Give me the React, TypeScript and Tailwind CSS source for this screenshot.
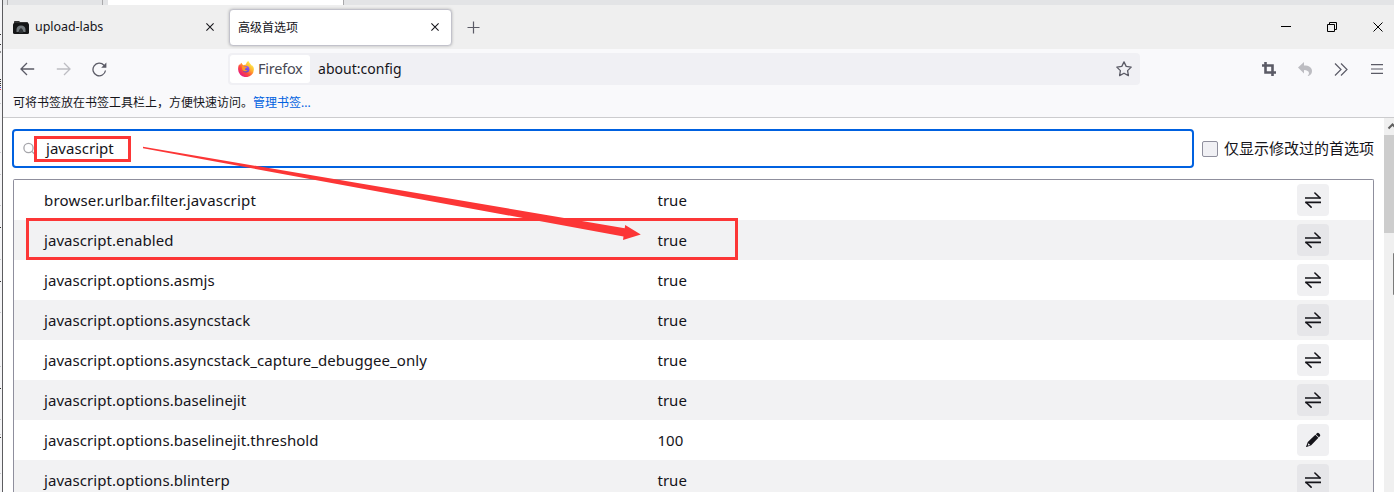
import React from 'react';

const font = "font-['Noto_Sans','Noto_Sans_CJK_SC',sans-serif]";

const rows: [string, string, string][] = [
  ['browser.urlbar.filter.javascript', 'true', 'toggle'],
  ['javascript.enabled', 'true', 'toggle'],
  ['javascript.options.asmjs', 'true', 'toggle'],
  ['javascript.options.asyncstack', 'true', 'toggle'],
  ['javascript.options.asyncstack_capture_debuggee_only', 'true', 'toggle'],
  ['javascript.options.baselinejit', 'true', 'toggle'],
  ['javascript.options.baselinejit.threshold', '100', 'edit'],
  ['javascript.options.blinterp', 'true', 'toggle'],
];

const ToggleIcon = () => (
  <svg width="16" height="16" viewBox="0 0 16 16" fill="none" stroke="#15141a">
    <path d="M0 6h15.800M.2 10.300H16" strokeWidth="1.700" />
    <path d="M9.900 1l4.900 4.800M6.100 15.200L1.200 10.500" strokeWidth="1.600" strokeLinecap="round" />
  </svg>
);

const EditIcon = () => (
  <svg width="16" height="16" viewBox="0 0 16 16" fill="#15141a">
    <path d="M10.800 2.300l.9-.9a1.700 1.700 0 0 1 2.400 0l.6.6a1.700 1.700 0 0 1 0 2.400l-.9.900z" />
    <path fillRule="evenodd" d="M10.300 2.700l3.100 3.100-7.200 7.500L1.600 15.100a.4.4 0 0 1-.5-.5l1.700-4.500zM3.500 11.300l-.7 2 .3.300 2-.7z" />
  </svg>
);

const Close = ({ size = 10, color = '#15141a', stroke = 1.2 }: { size?: number; color?: string; stroke?: number }) => (
  <svg width={size} height={size} viewBox="0 0 10 10" fill="none" stroke={color} strokeWidth={stroke}>
    <path d="M.5.5l9 9M9.500.5l-9 9" />
  </svg>
);

const FirefoxLogo = () => (
  <svg width="16" height="16" viewBox="0 0 16 16">
    <defs>
      <linearGradient id="flame" x1=".85" y1=".1" x2=".15" y2=".9">
        <stop offset="0" stopColor="#fff44f" />
        <stop offset=".35" stopColor="#ffb02e" />
        <stop offset=".65" stopColor="#ff4a3c" />
        <stop offset="1" stopColor="#e31587" />
      </linearGradient>
      <linearGradient id="globe" x1=".7" y1="0" x2=".3" y2="1">
        <stop offset="0" stopColor="#9059ff" />
        <stop offset="1" stopColor="#5b3fc4" />
      </linearGradient>
    </defs>
    <path fill="url(#flame)" d="M15.500 6.200c-.4-1-1.100-1.900-1.800-2.300.4.800.6 1.500.7 2.100C13.500 3.400 11.400 2.400 10.300 0 8.700 1 8.100 2.500 8 3.500c-.9.100-1.600.300-2.300.700C4.400 4 3.800 3 3.600 1.800 2.700 2.300 2.200 3.300 2 4.200 1.500 3.900 1.500 3.300 1.500 3 .5 4.400.1 6.200.1 8a7.900 7.900 0 0 0 15.800.4c0-.8-.1-1.500-.4-2.200z" />
    <circle cx="8.100" cy="8.300" r="3.300" fill="url(#globe)" />
    <path fill="#ff9a25" d="M4 5.200c1.200-.6 2.200-.1 2.800.5h2c.5.200.1.900-.7 1.200-.8.300-.7.700-1.300 1 .5 1.500 2 1.400 3 1-1 2-4.600 2-5.600-.7z" />
  </svg>
);

const Folder = () => (
  <svg width="16" height="14" viewBox="0 0 16 14">
    <path d="M1 1.800Q1 1 1.800 1H6l1.200 1h7q.8 0 .8.800V6H1z" fill="#333" />
    <rect x="0" y="3" width="16" height="11" rx="1.500" fill="#141516" />
    <path d="M3.500 12V9.800C3.500 7.500 5 5.600 8 5.600s4.500 1.900 4.500 4.200V12h-2l-.8-2L8 8.300 6.300 10l-.8 2z" fill="#70777b" />
    <path d="M6 12.800V10.300l2-2 2 2v2.500z" fill="#303437" />
  </svg>
);

export default function App() {
  return (
    <div className={`relative flex h-[492px] w-[1394px] overflow-hidden bg-white text-[#15141a] ${font}`}>
      <div className="w-[3px] shrink-0 border-r border-[#5c5c5f] bg-[#f5f5f7]">
        <svg width="2" height="492" viewBox="0 0 2 492">
          <path d="M0 34.500h1M0 44.500h1M0 52h1M0 227.500h1M0 281.500h1M0 388.500h1M0 437.500h1" stroke="#333" />
          <path d="M0 79.500h1M0 81.500h1M0 83.500h1M0 85.500h1" stroke="#333" />
          <path d="M0 87.500h1" stroke="#4a4ad0" />
          <path d="M0 89.500h1" stroke="#d04a5a" />
          <path d="M0 103.500h1M0 152.500h1M0 174.500h1M0 205.500h1M0 259.500h1M0 312.500h1M0 366.500h1M0 419.500h1M0 434.500h1M0 473.500h1" stroke="#c8c8cc" />
        </svg>
      </div>
      <div className="flex min-w-0 flex-1 flex-col">
        <div className="flex h-[5px] shrink-0 bg-[#e3e4e6]">
          <div className="ml-[4px] w-[96px] border-x border-[#a9a9ab]" />
          <div className="ml-[5px] w-[236px] border-r border-[#a9a9ab] bg-white" />
        </div>

        <div className="flex h-11 shrink-0 items-center bg-[#efefef] text-[12px]">
          <div className="flex h-full w-[226px] items-center pl-[10px]">
            <Folder />
            <span className="ml-[6px] flex-1 pt-px text-[12.5px] tracking-[-0.05px] whitespace-nowrap">upload-labs</span>
            <span className="mr-[15px]"><Close size={8} stroke={1.3} /></span>
          </div>
          <div className="flex h-[37px] w-[223px] items-center rounded border border-[#c2c2cb] bg-white pl-2 shadow-[0_0_3px_rgba(0,0,0,0.25)]">
            <span className="flex-1 pt-[2px] whitespace-nowrap">高级首选项</span>
            <span className="mr-3"><Close size={8} stroke={1.3} /></span>
          </div>
          <svg className="ml-[15px]" width="13" height="13" viewBox="0 0 13 13" stroke="#5b5b66" strokeWidth="1.200"><path d="M6.500.5v12M.5 6.500h12" /></svg>
          <div className="ml-auto flex items-center">
            <svg width="10" height="10" viewBox="0 0 10 10"><path d="M0 4.500h10" stroke="#000" /></svg>
            <svg className="ml-9" width="10" height="10" viewBox="0 0 10 10" fill="none" stroke="#000"><path d="M.5 2.500h7v7h-7zM2.500 2V.5h7v7H8" /></svg>
            <span className="mr-[11px] ml-9"><Close color="#000" stroke={1} /></span>
          </div>
        </div>

        <div className="flex h-10 shrink-0 items-center bg-[#f9f9fb] text-[#5b5b66]">
          <svg className="ml-[17px]" width="15" height="14" viewBox="0 0 15 14" fill="none" stroke="#5b5b66" strokeWidth="1.300"><path d="M14.200 7H1M7 1L1 7l6 6" /></svg>
          <svg className="ml-[21px]" width="15" height="14" viewBox="0 0 15 14" fill="none" stroke="#bdbdc2" strokeWidth="1.300"><path d="M.8 7H14M8 1l6 6-6 6" /></svg>
          <svg className="ml-[21px]" width="15" height="15" viewBox="0 0 15 15" fill="none" stroke="#5b5b66" strokeWidth="1.300"><path d="M13.500 8.500A6.300 6.300 0 1 1 12 3.300l1.500 1.500" /><path d="M14.400.5v5.200H9.200z" fill="#5b5b66" stroke="none" /></svg>
          <div className="ml-[121px] flex h-8 w-[912px] items-center rounded bg-[#f0f0f4] pl-[2px]">
            <div className="flex h-7 w-20 items-center rounded-[3px] bg-white pl-2">
              <FirefoxLogo />
              <span className="ml-1 pb-px text-[14.500px] tracking-[-0.25px] text-[#4a4a55]">Firefox</span>
            </div>
            <span className="ml-2 flex-1 text-[14px]/[20px] tracking-[0.03px] text-[#15141a]">about:config</span>
            <svg className="mr-2" width="16" height="16" viewBox="0 0 16 16" fill="none" stroke="#5b5b66" strokeWidth="1.300" strokeLinejoin="round"><path d="M8 .9l2.200 4.500 5 .7-3.600 3.500.8 5L8 12.200l-4.400 2.400.8-5L.8 6.100l5-.7z" /></svg>
          </div>
          <svg className="ml-[122px]" width="14" height="14" viewBox="0 0 14 14" fill="none" stroke="#5b5b66" strokeWidth="2.600"><path d="M0 3.500h10.500V14M3.500 0v10.500H14" /></svg>
          <svg className="ml-[22px]" width="14" height="14" viewBox="0 0 14 14" fill="#bdbdc2"><path d="M0 5.500L6 0v3.500c5 0 8 2 8 5.500 0 2-1 4-3.500 5-.8.200-1 0-.5-.6C12.500 10.500 10 8 6 8v3.500z" /></svg>
          <svg className="ml-[22px]" width="14" height="13" viewBox="0 0 14 13" fill="none" stroke="#5b5b66" strokeWidth="1.200"><path d="M1 .5l6 6-6 6M7 .5l6 6-6 6" /></svg>
          <svg className="ml-[23px]" width="12" height="10" viewBox="0 0 12 10" stroke="#5b5b66" strokeWidth="1.200"><path d="M0 .6h12M0 5h12M0 9.400h12" /></svg>
        </div>

        <div className="flex h-[29px] shrink-0 items-center border-b border-[#ccccce] bg-[#f9f9fb] pl-[10px] text-[12px] whitespace-nowrap">
          <span>可将书签放在书签工具栏上，方便快速访问。</span>
          <a className="text-[#0061e0]">管理书签...</a>
        </div>

        <div className="flex min-h-0 flex-1">
          <div className="flex w-[1381px] shrink-0 flex-col pt-[11px] pl-[9px]">
            <div className="flex items-center">
              <div className="flex h-[39px] w-[1182px] items-center rounded border-2 border-[#0061e0] pl-[9px]">
                <svg width="14" height="14" viewBox="0 0 14 14" fill="none" stroke="#a5a5aa" strokeWidth="1.300"><circle cx="5.500" cy="6" r="4.600" /><path d="M9 9.500l4 4" /></svg>
                <span className="ml-[9px] text-[15px] tracking-[0.04px]">javascript</span>
              </div>
              <span className="ml-2 size-4 rounded-[2px] border border-[#8f8f9d] bg-[#f0f0f4]" />
              <span className="ml-[6px] text-[15px] whitespace-nowrap">仅显示修改过的首选项</span>
            </div>
            <div className="mt-[11px] ml-px flex w-[1361px] flex-1 flex-col overflow-hidden rounded-t-[2px] border border-b-0 border-[#8f8f9d]">
              {rows.map(([name, value, kind], i) => (
                <div key={name} className={`flex h-10 shrink-0 items-center pl-[30px] text-[15px] ${i % 2 ? 'bg-[#f2f2f3]' : 'bg-white'}`}>
                  <span className={`w-[613.5px] ${i === 0 ? 'tracking-[0.19px]' : 'tracking-[0.06px]'}`}>{name}</span>
                  <span className="w-[639.5px]">{value}</span>
                  <span className={`flex size-8 items-center justify-center rounded ${i % 2 ? 'bg-[#e6e6e9]' : 'bg-[#f0f0f2]'}`}>
                    {kind === 'toggle' ? <ToggleIcon /> : <EditIcon />}
                  </span>
                </div>
              ))}
            </div>
          </div>
          <div className="flex flex-1 flex-col overflow-hidden bg-[#f0f0f0]">
            <svg className="h-[17px] w-[10px] shrink-0" viewBox="0 0 10 17" fill="none" stroke="#606060" strokeWidth="2"><path d="M4.500 10.500l4-4 4 4" /></svg>
            <div className="h-[98px] shrink-0 bg-[#cdcdcd]" />
            <div className="mt-5 ml-auto h-[42px] w-px shrink-0 rounded-l bg-[#7a7a7a]" />
          </div>
        </div>
      </div>

      <svg className="pointer-events-none absolute inset-0" width="1394" height="492" viewBox="0 0 1394 492" fill="none">
        <rect x="35.500" y="137.500" width="94" height="23" stroke="#fc3636" strokeWidth="3" />
        <rect x="27.500" y="219.500" width="709" height="39" stroke="#fc3636" strokeWidth="3" />
        <path d="M143 146.800L624.700 228.200 625.200 225 640.800 234.600 623 240 623.500 236.500 143 148.300z" fill="#fc3636" />
      </svg>
    </div>
  );
}
